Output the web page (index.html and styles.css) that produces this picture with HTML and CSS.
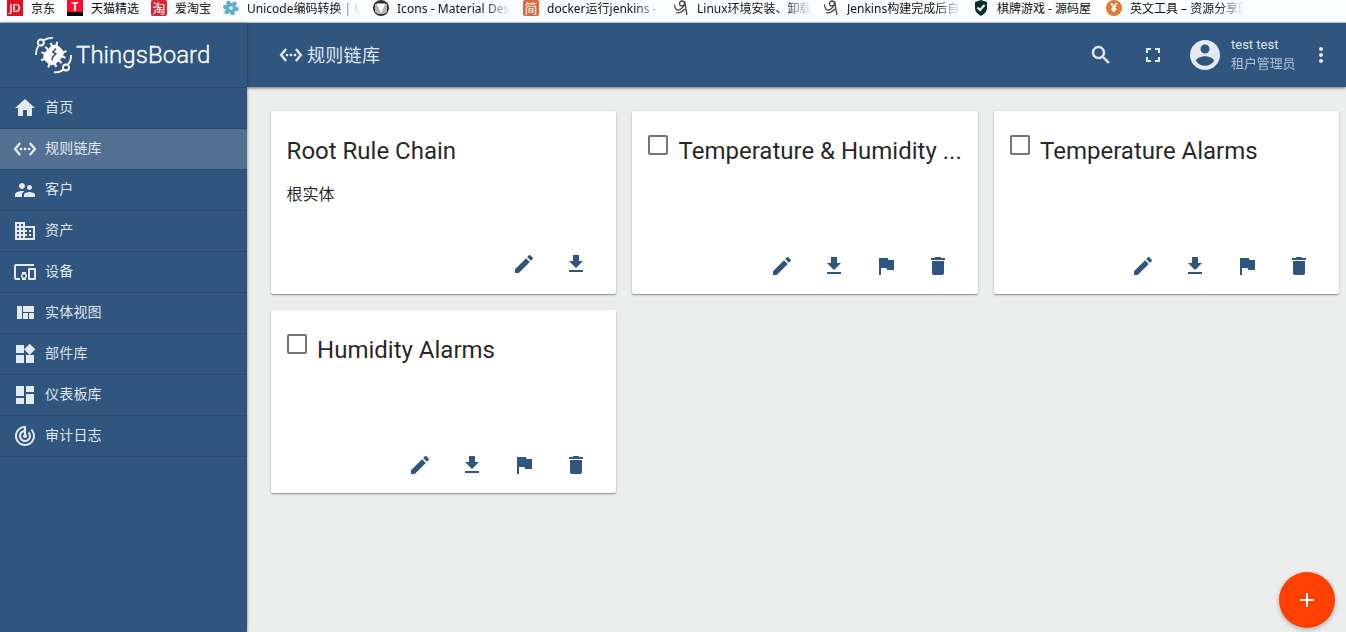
FILE: index.html
```html
<!DOCTYPE html>
<html lang="zh-CN">
<head>
<meta charset="utf-8">
<title>ThingsBoard | 规则链库</title>
<link rel="stylesheet" href="styles.css">
</head>
<body>
<svg class="sprite" aria-hidden="true">
  <symbol id="home" viewBox="0 0 24 24"><path d="M10 20v-6h4v6h5v-8h3L12 3 2 12h3v8z"/></symbol>
  <symbol id="ethernet" viewBox="0 0 24 24"><path stroke="currentColor" stroke-width=".4" d="M7.77 6.76L6.23 5.48.82 12l5.41 6.52 1.54-1.28L3.42 12l4.35-5.24zM7 13h2v-2H7v2zm10-2h-2v2h2v-2zm-6 2h2v-2h-2v2zm6.77-7.52l-1.54 1.28L20.58 12l-4.35 5.24 1.54 1.28L23.18 12l-5.41-6.52z"/></symbol>
  <symbol id="people" viewBox="0 0 24 24"><path d="M16.5 12c1.38 0 2.49-1.12 2.49-2.5S17.88 7 16.5 7C15.12 7 14 8.12 14 9.5s1.12 2.5 2.5 2.5zM9 11c1.66 0 2.99-1.34 2.99-3S10.66 5 9 5C7.34 5 6 6.34 6 8s1.34 3 3 3zm7.5 3c-1.83 0-5.5.92-5.5 2.75V19h11v-2.25c0-1.83-3.67-2.75-5.5-2.75zM9 13c-2.33 0-7 1.17-7 3.5V19h7v-2.25c0-.85.33-2.34 2.37-3.47C10.5 13.1 9.66 13 9 13z"/></symbol>
  <symbol id="domain" viewBox="0 0 24 24"><path d="M12 7V3H2v18h20V7H12zM6 19H4v-2h2v2zm0-4H4v-2h2v2zm0-4H4V9h2v2zm0-4H4V5h2v2zm4 12H8v-2h2v2zm0-4H8v-2h2v2zm0-4H8V9h2v2zm0-4H8V5h2v2zm10 12h-8v-2h2v-2h-2v-2h2v-2h-2V9h8v10zm-2-8h-2v2h2v-2zm0 4h-2v2h2v-2z"/></symbol>
  <symbol id="devices" viewBox="0 0 24 24"><path d="M3 6h18V4H3c-1.100 0-2 .9-2 2v12c0 1.100.9 2 2 2h4v-2H3V6zm10 6H9v1.780c-.61.55-1 1.330-1 2.220s.39 1.670 1 2.220V20h4v-1.780c.61-.55 1-1.340 1-2.220s-.39-1.670-1-2.220V12zm-2 5.500c-.83 0-1.500-.67-1.500-1.500s.67-1.500 1.500-1.500 1.500.67 1.500 1.500-.67 1.500-1.500 1.500zM22 8h-6c-.5 0-1 .5-1 1v10c0 .5.5 1 1 1h6c.5 0 1-.5 1-1V9c0-.5-.5-1-1-1zm-1 10h-4v-8h4v8z"/></symbol>
  <symbol id="quilt" viewBox="0 0 24 24"><path d="M10 18h5v-6h-5v6zm-6 0h5V5H4v13zm12 0h5v-6h-5v6zM10 5v6h11V5H10z"/></symbol>
  <symbol id="widgets" viewBox="0 0 24 24"><path d="M13 13v8h8v-8h-8zM3 21h8v-8H3v8zM3 3v8h8V3H3zm13.660-1.310L11 7.340 16.660 13l5.660-5.660-5.660-5.650z"/></symbol>
  <symbol id="dashboard" viewBox="0 0 24 24"><path d="M3 13h8V3H3v10zm0 8h8v-6H3v6zm10 0h8V11h-8v10zm0-18v6h8V3h-8z"/></symbol>
  <symbol id="track" viewBox="0 0 24 24"><path d="M19.070 4.930l-1.410 1.410C19.100 7.790 20 9.790 20 12c0 4.420-3.580 8-8 8s-8-3.580-8-8c0-4.080 3.050-7.440 7-7.930v2.020C8.160 6.570 6 9.030 6 12c0 3.310 2.690 6 6 6s6-2.690 6-6c0-1.660-.67-3.160-1.760-4.240l-1.410 1.410C15.550 9.900 16 10.900 16 12c0 2.210-1.790 4-4 4s-4-1.790-4-4c0-1.860 1.280-3.410 3-3.860v2.140c-.6.350-1 .98-1 1.720 0 1.100.9 2 2 2s2-.9 2-2c0-.74-.4-1.380-1-1.720V2h-1C6.480 2 2 6.480 2 12s4.480 10 10 10 10-4.480 10-10c0-2.760-1.120-5.260-2.930-7.070z"/></symbol>
  <symbol id="search" viewBox="0 0 24 24"><path stroke="currentColor" stroke-width=".4" d="M15.500 14h-.79l-.28-.27C15.410 12.590 16 11.110 16 9.500 16 5.910 13.090 3 9.500 3S3 5.910 3 9.500 5.910 16 9.500 16c1.610 0 3.090-.59 4.230-1.570l.27.28v.79l5 4.990L20.490 19l-4.990-5zm-6 0C7.010 14 5 11.990 5 9.500S7.010 5 9.500 5 14 7.010 14 9.500 11.990 14 9.500 14z"/></symbol>
  <symbol id="fullscreen" viewBox="0 0 24 24"><path d="M7 14H5v5h5v-2H7v-3zm-2-4h2V7h3V5H5v5zm12 7h-3v2h5v-5h-2v3zM14 5v2h3v3h2V5h-5z"/></symbol>
  <symbol id="account" viewBox="0 0 24 24"><path d="M12 2C6.480 2 2 6.480 2 12s4.480 10 10 10 10-4.480 10-10S17.520 2 12 2zm0 3c1.660 0 3 1.340 3 3s-1.340 3-3 3-3-1.340-3-3 1.340-3 3-3zm0 14.200c-2.500 0-4.710-1.280-6-3.220.03-1.990 4-3.080 6-3.080 1.990 0 5.970 1.090 6 3.080-1.290 1.940-3.500 3.220-6 3.220z"/></symbol>
  <symbol id="more" viewBox="0 0 24 24"><path d="M12 8c1.100 0 2-.9 2-2s-.9-2-2-2-2 .9-2 2 .9 2 2 2zm0 2c-1.100 0-2 .9-2 2s.9 2 2 2 2-.9 2-2-.9-2-2-2zm0 6c-1.100 0-2 .9-2 2s.9 2 2 2 2-.9 2-2-.9-2-2-2z"/></symbol>
  <symbol id="edit" viewBox="0 0 24 24"><path d="M3 17.250V21h3.750L17.810 9.940l-3.750-3.750L3 17.250zM20.710 7.040c.39-.39.39-1.020 0-1.410l-2.340-2.340c-.39-.39-1.020-.39-1.410 0l-1.830 1.830 3.750 3.750 1.830-1.830z"/></symbol>
  <symbol id="download" viewBox="0 0 24 24"><path d="M19 9h-4V3H9v6H5l7 7 7-7zM5 18v2h14v-2H5z"/></symbol>
  <symbol id="flag" viewBox="0 0 24 24"><path d="M14.400 6L14 4H5v17h2v-7h5.600l.4 2h7V6z"/></symbol>
  <symbol id="trash" viewBox="0 0 24 24"><path d="M6 19c0 1.100.9 2 2 2h8c1.100 0 2-.9 2-2V7H6v12zM19 4h-3.500l-1-1h-5l-1 1H5v2h14V4z"/></symbol>
  <symbol id="add" viewBox="0 0 24 24"><path d="M19 13h-6v6h-2v-6H5v-2h6V5h2v6h6v2z"/></symbol>
  <symbol id="sketch" viewBox="0 0 16 16"><g fill="none" stroke="#4a4648" stroke-width="1.300"><circle cx="9" cy="3.500" r="2.500"/><path d="M1.500 4.500c.5 4 1.500 6 4 5.500 3-.5 5-3 6.500-7 .6 4 1 7.500 2 12M3 12.500c3 1 7-1.500 9-3.500"/></g></symbol>
</svg>

<nav class="bookmarks">
  <a class="bookmark bookmark-60"><span class="fav fav-jd">JD</span><span class="label">京东</span></a>
  <a class="bookmark bookmark-84"><span class="fav fav-tmall">T</span><span class="label">天猫精选</span></a>
  <a class="bookmark bookmark-72"><span class="fav fav-tao">淘</span><span class="label">爱淘宝</span></a>
  <a class="bookmark fade"><svg class="fav" viewBox="0 0 16 16"><g fill="#5eafd0"><circle cx="8" cy="8" r="5"/><circle cx="5.500" cy="3" r="2.300"/><circle cx="11.500" cy="3.800" r="2.300"/><circle cx="13.500" cy="9" r="2.300"/><circle cx="9.500" cy="13" r="2.300"/><circle cx="3.800" cy="12" r="2.300"/><circle cx="2.300" cy="7" r="2.300"/></g><circle cx="8" cy="8" r="1.800" fill="#fbfcfe"/></svg><span class="label">Unicode编码转换 | U</span></a>
  <a class="bookmark fade"><svg class="fav" viewBox="0 0 16 16"><circle cx="8" cy="8" r="8" fill="#303030"/><path d="M2 4h12v8l-3 2H5l-3-2z" fill="#b5b5b5"/><path d="M3.500 3.500h9L8 13z" fill="#fff"/></svg><span class="label latin">Icons - Material Des</span></a>
  <a class="bookmark fade"><span class="fav fav-jian">简</span><span class="label">docker运行jenkins -</span></a>
  <a class="bookmark fade"><svg class="fav"><use href="#sketch"/></svg><span class="label">Linux环境安装、卸载</span></a>
  <a class="bookmark fade"><svg class="fav"><use href="#sketch"/></svg><span class="label">Jenkins构建完成后自</span></a>
  <a class="bookmark bookmark-133"><svg class="fav" viewBox="0 0 16 16"><path d="M8 0l6 2v6c0 4-3 6-6 8-3-2-6-4-6-8V2z" fill="#06302d"/><path d="M4.500 7.500L7 10l4.500-5" fill="none" stroke="#fff" stroke-width="2"/></svg><span class="label">棋牌游戏 - 源码屋</span></a>
  <a class="bookmark fade"><span class="fav fav-yen">¥</span><span class="label">英文工具 – 资源分享网</span></a>
</nav>

<div class="app">
  <aside class="sidebar">
    <div class="brand">
      <svg class="brand-mark" viewBox="0 0 38 38" fill="none" stroke="#fff" stroke-width="1.800">
        <circle cx="5.800" cy="6.500" r="3"/><path d="M1 19c-.2-4 .8-7 2.800-9.800M8.200 4.600C11 2.300 14 1.500 18 1.900"/>
        <circle cx="31" cy="31.500" r="3"/><path d="M36 19c.2 4-.8 7-3.200 10M28.600 33.500C26 35.800 23 36.600 19 36.200"/>
        <g transform="rotate(45 18.500 19)"><path d="M14 11l-2-4M23 11l2-4M12 14l-4-1.500M25 14l4-1.500M11 19H7M26 19H30M12 24l-4 1.500M25 24l4 1.500M15 28l-1.500 3.500M22 28l1.500 3.500" stroke-width="2"/><rect x="10.500" y="9" width="16" height="20" rx="6" fill="#fff" stroke="none"/></g>
        <path d="M21 12.500l-3.200 3.500 3 1.700-3 3.200-.8 3.500" stroke="#305680" stroke-width="1.600"/>
      </svg>
      <span class="brand-name">ThingsBoard</span>
    </div>
    <a class="menu-item"><svg class="icon"><use href="#home"/></svg><span>首页</span></a>
    <a class="menu-item active"><svg class="icon"><use href="#ethernet"/></svg><span>规则链库</span></a>
    <a class="menu-item"><svg class="icon"><use href="#people"/></svg><span>客户</span></a>
    <a class="menu-item"><svg class="icon"><use href="#domain"/></svg><span>资产</span></a>
    <a class="menu-item"><svg class="icon"><use href="#devices"/></svg><span>设备</span></a>
    <a class="menu-item"><svg class="icon"><use href="#quilt"/></svg><span>实体视图</span></a>
    <a class="menu-item"><svg class="icon"><use href="#widgets"/></svg><span>部件库</span></a>
    <a class="menu-item"><svg class="icon"><use href="#dashboard"/></svg><span>仪表板库</span></a>
    <a class="menu-item"><svg class="icon"><use href="#track"/></svg><span>审计日志</span></a>
  </aside>

  <div class="main">
    <header class="toolbar">
      <svg class="icon"><use href="#ethernet"/></svg>
      <h1 class="page-title">规则链库</h1>
      <svg class="icon tool-search"><use href="#search"/></svg>
      <svg class="icon tool-full"><use href="#fullscreen"/></svg>
      <svg class="avatar"><use href="#account"/></svg>
      <div class="user"><span class="user-name">test test</span><span class="user-role">租户管理员</span></div>
      <svg class="icon tool-more"><use href="#more"/></svg>
    </header>

    <main class="cards">
      <section class="card root">
        <div class="card-head"><h2>Root Rule Chain</h2></div>
        <p class="card-text">根实体</p>
        <div class="actions"><svg class="icon"><use href="#edit"/></svg><svg class="icon"><use href="#download"/></svg></div>
      </section>
      <section class="card">
        <div class="card-head"><span class="checkbox"></span><h2>Temperature &amp; Humidity ...</h2></div>
        <div class="actions"><svg class="icon"><use href="#edit"/></svg><svg class="icon"><use href="#download"/></svg><svg class="icon"><use href="#flag"/></svg><svg class="icon"><use href="#trash"/></svg></div>
      </section>
      <section class="card">
        <div class="card-head"><span class="checkbox"></span><h2>Temperature Alarms</h2></div>
        <div class="actions"><svg class="icon"><use href="#edit"/></svg><svg class="icon"><use href="#download"/></svg><svg class="icon"><use href="#flag"/></svg><svg class="icon"><use href="#trash"/></svg></div>
      </section>
      <section class="card">
        <div class="card-head"><span class="checkbox"></span><h2>Humidity Alarms</h2></div>
        <div class="actions"><svg class="icon"><use href="#edit"/></svg><svg class="icon"><use href="#download"/></svg><svg class="icon"><use href="#flag"/></svg><svg class="icon"><use href="#trash"/></svg></div>
      </section>
    </main>
  </div>
</div>
<button class="fab" aria-label="添加"><svg class="icon"><use href="#add"/></svg></button>
</body>
</html>
```
FILE: styles.css
```css
* { box-sizing: border-box; }

body {
  margin: 0;
  height: 632px;
  overflow: hidden;
  display: flex;
  flex-direction: column;
  background: #eceeed;
  font-family: Roboto, "Noto Sans CJK SC", sans-serif;
}

.sprite { display: none; }

.icon {
  flex: none;
  width: 24px;
  height: 24px;
  fill: currentColor;
}

/* Bookmarks strip */
.bookmarks {
  flex: none;
  display: flex;
  height: 23px;
  padding-left: 7px;
  background: #fbfcfe;
  border-bottom: 1px solid #d2d3d5;
  font: 12px/16px "Noto Sans", "Noto Sans CJK SC", sans-serif;
  color: #111;
  white-space: nowrap;
}
.bookmark {
  flex: none;
  width: 150px;
  display: flex;
  gap: 8px;
}
.bookmark-60 { width: 60px; }
.bookmark-84 { width: 84px; }
.bookmark-72 { width: 72px; }
.bookmark-133 { width: 133px; }
.label { padding-top: 1px; }
.fade .label {
  width: 118px;
  -webkit-mask-image: linear-gradient(90deg, #000 88px, transparent 114px);
  mask-image: linear-gradient(90deg, #000 88px, transparent 114px);
}
.latin { letter-spacing: 0.05px; }
.fav {
  flex: none;
  width: 16px;
  height: 16px;
  color: #fff;
  text-align: center;
  line-height: 16px;
}
.fav-jd { background: #e01222; font-size: 11px; font-weight: 500; }
.fav-tmall { background: linear-gradient(#ff0a2b 12px, #000 12px); font-weight: 700; font-size: 12px; line-height: 14px; }
.fav-tao { background: #dc2230; border-radius: 2px; font-size: 13px; }
.fav-jian { background: #e0643c; border-radius: 2px; font-size: 13px; }
.fav-yen { background: #e07a35; border-radius: 50%; font-weight: 700; }

.app { flex: 1; display: flex; min-height: 0; }

/* Sidebar */
.sidebar {
  z-index: 2;
  width: 247px;
  background: #305680;
  color: rgba(255, 255, 255, 0.87);
  box-shadow: 0 0 3px rgba(0, 0, 0, 0.45);
}
.brand {
  display: flex;
  height: 65px;
  padding: 13px 0 0 35px;
  gap: 3px;
  border-bottom: 1px solid #294b70;
}
.brand-mark { flex: none; width: 38px; height: 38px; }
.brand-name {
  font-size: 24px;
  font-weight: 300;
  line-height: 38px;
  letter-spacing: 0.05px;
  -webkit-text-stroke: 0.3px #fff;
  color: #fff;
}
.menu-item {
  display: flex;
  align-items: center;
  height: 41px;
  padding-left: 13px;
  gap: 8px;
  border-bottom: 1px solid #294b70;
  font-size: 14px;
}
.menu-item span { padding-bottom: 5px; letter-spacing: 0.2px; }
.active { background: #517092; }

/* Toolbar */
.main { flex: 1; min-width: 0; }
.toolbar {
  display: flex;
  align-items: center;
  height: 64px;
  padding: 0 13px 0 32px;
  background: #305680;
  color: rgba(255, 255, 255, 0.87);
  box-shadow: 0 1px 3px rgba(0, 0, 0, 0.55);
}
.page-title {
  margin: 0 auto 0 4px;
  padding-top: 1px;
  font-size: 18px;
  font-weight: 400;
  line-height: 26px;
  letter-spacing: 0.3px;
}
.tool-search { margin-right: 28px; }
.tool-full { margin-right: 22px; }
.avatar { width: 36px; height: 36px; margin-right: 8px; fill: currentColor; }
.user {
  display: flex;
  flex-direction: column;
  width: 78px;
  font-size: 13px;
  line-height: 19px;
  padding-bottom: 2px;
}
.user-role { opacity: 0.7; letter-spacing: -0.1px; }

/* Rule chain cards */
.cards {
  display: grid;
  grid-template-columns: repeat(3, 1fr);
  grid-auto-rows: 183px;
  gap: 16px;
  padding: 24px 7px 0 23.600px;
}
.card {
  display: flex;
  flex-direction: column;
  min-width: 0;
  padding: 24px 16px 4px;
  background: #fff;
  border-radius: 2px;
  box-shadow: 0 1px 3px rgba(0, 0, 0, 0.2), 0 1px 1px rgba(0, 0, 0, 0.25);
  color: rgba(0, 0, 0, 0.87);
}
.card-head { display: flex; gap: 10.500px; }
.checkbox {
  flex: none;
  width: 20px;
  height: 20px;
  border: 2px solid #757575;
  border-radius: 2px;
}
.card-head h2 {
  margin: 0;
  font-size: 24px;
  font-weight: 400;
  line-height: 32px;
  white-space: nowrap;
}
.card-text { margin: 16px 0 0; font-size: 16px; line-height: 24px; }
.actions {
  display: flex;
  justify-content: flex-end;
  gap: 28px;
  margin-top: auto;
  padding: 0 12px 12px 0;
  color: #305680;
}
.root .actions { padding-bottom: 14px; }

.fab {
  position: absolute;
  z-index: 3;
  right: 11px;
  bottom: 4px;
  width: 56px;
  height: 56px;
  display: flex;
  align-items: center;
  justify-content: center;
  padding: 0;
  border: 0;
  border-radius: 50%;
  background: #ff4000;
  color: #fff;
  box-shadow: 0 2px 5px rgba(0, 0, 0, 0.26);
}
```
